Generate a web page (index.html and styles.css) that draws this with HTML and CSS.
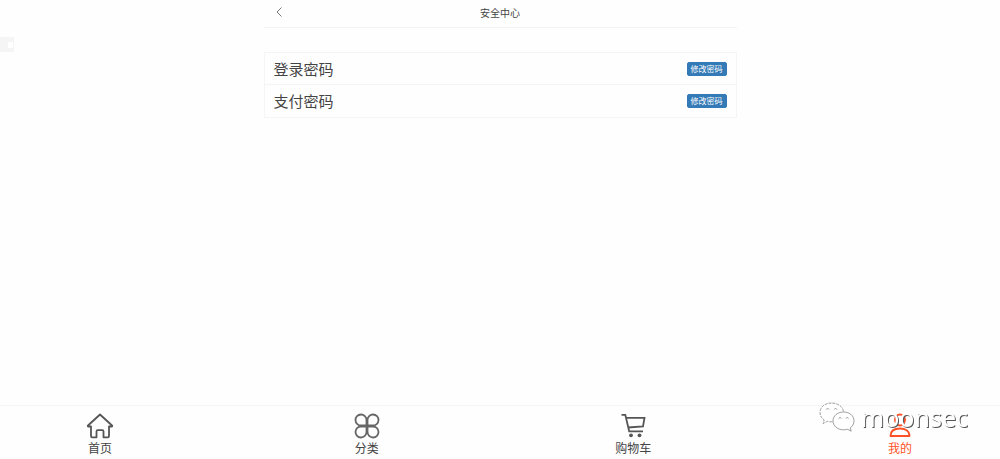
FILE: index.html
```html
<!DOCTYPE html>
<html lang="zh-CN">

<head>
    <meta charset="UTF-8">
    <meta name="viewport" content="width=device-width, initial-scale=1.0">
    <title>安全中心</title>
    <link rel="stylesheet" href="styles.css">
</head>

<body>
    <div class="side-tab"><span class="side-dot"></span></div>

    <div class="container">
        <header class="top-bar">
            <a href="#" class="back" aria-label="返回">
                <svg width="6" height="10" viewBox="0 0 6 10" fill="none" stroke="#777">
                    <path d="M5.5 0.5L1 5l4.5 4.5" />
                </svg>
            </a>
            <h1>安全中心</h1>
        </header>

        <ul class="list">
            <li>
                <span>登录密码</span>
                <button type="button">修改密码</button>
            </li>
            <li>
                <span>支付密码</span>
                <button type="button">修改密码</button>
            </li>
        </ul>
    </div>

    <nav class="tab-bar">
        <a href="#">
            <svg width="28" height="26" viewBox="0 0 28 26" fill="none" stroke="#555" stroke-width="1.8" stroke-linejoin="round">
                <path d="M14 1.5L2 12.5c-.4.4-.2 1 .4 1H5V23c0 .8.5 1.3 1.3 1.3h4.2v-6c0-.7.5-1.2 1.2-1.2h4.6c.7 0 1.2.5 1.2 1.2v6h4.2c.8 0 1.3-.5 1.3-1.3v-9.5h2.6c.6 0 .8-.6.4-1z" />
            </svg>
            <span>首页</span>
        </a>
        <a href="#">
            <svg width="28" height="26" viewBox="0 0 28 26" fill="none" stroke="#666" stroke-width="1.8">
                <path d="M13.5 12.5H8.3a5.5 5.5 0 1 1 5.2-5.5z" />
                <path d="M14.500 12.500h5.200a5.500 5.500 0 1 0-5.200-5.500z" />
                <path d="M13.500 13.500H8.300a5.500 5.500 0 1 0 5.200 5.500z" />
                <path d="M14.500 13.500h5.200a5.500 5.500 0 1 1-5.200 5.500z" />
            </svg>
            <span>分类</span>
        </a>
        <a href="#">
            <svg width="28" height="26" viewBox="0 0 28 26" fill="none" stroke="#555" stroke-width="1.8">
                <path d="M2.5 1.800h3.800L10.200 18.300H24M6.900 4.800h18.600l-1.500 8.500-15.100 1.200" />
                <circle cx="12" cy="22.300" r="1.900" fill="#555" stroke="none" />
                <circle cx="20.500" cy="22.300" r="1.900" fill="#555" stroke="none" />
            </svg>
            <span>购物车</span>
        </a>
        <a href="#" class="active">
            <svg width="28" height="26" viewBox="0 0 28 26" fill="none" stroke="#ff5226" stroke-width="1.8">
                <ellipse cx="14" cy="7" rx="5" ry="5.500" />
                <path d="M4.500 23c0-5 3.800-7.500 9.500-7.500s9.500 2.500 9.500 7.500z" stroke-linejoin="round" />
            </svg>
            <span>我的</span>
        </a>
    </nav>

    <div class="watermark">
        <svg width="36" height="30" viewBox="0 0 36 30" fill="#fff" stroke="#777" stroke-width="0.7">
            <path d="M12.500 1C6 1 1 5 1 10.500c0 3 1.600 5.800 4.200 7.500L4 21.500l4.500-2.200c1.300.3 2.600.5 4 .5 6.500 0 12-3.800 12-9.300S19 1 12.500 1z" stroke-dasharray="3 1" />
            <path d="M24.500 10C18.500 10 14 13.800 14 18.800s4.500 9 10.500 9c1.400 0 2.700-.2 3.900-.6l3.800 2-1-3.300c2.400-1.600 3.800-4.200 3.800-7.100 0-5-4.500-8.800-10.500-8.800z" />
            <path d="M7.200 7.500a1.500 1.500 0 0 1 2.800 0M15.200 7.500a1.500 1.500 0 0 1 2.800 0M19.800 16.500a1.300 1.300 0 0 1 2.500 0M27 16.500a1.300 1.300 0 0 1 2.500 0" fill="none" />
        </svg>
        <span>moonsec</span>
    </div>
</body>

</html>
```
FILE: styles.css
```css
* {
    box-sizing: border-box;
}

body {
    margin: 0;
    min-height: 100vh;
    background-color: #fefefe;
    color: #444;
    font-family: "Noto Sans CJK SC", sans-serif;
}

a {
    color: inherit;
    text-decoration: none;
}

.container {
    width: 47.3%;
    margin: 0 auto;
}

.top-bar {
    display: grid;
    grid-template-columns: 1fr auto 1fr;
    align-items: center;
    height: 28px;
    padding: 0 12px 2px;
    border-bottom: 1px solid #f3f3f3;
}

.back {
    display: flex;
    padding-bottom: 2px;
}

.top-bar h1 {
    margin: 0;
    font-size: 10px;
    font-weight: 400;
    line-height: 16px;
}

.list {
    margin: 24px 0 0;
    padding: 0;
    list-style: none;
    border: 1px solid #f5f5f5;
}

.list li {
    display: flex;
    justify-content: space-between;
    align-items: center;
    height: 31px;
    padding: 0 9px;
    font-size: 15px;
    line-height: 22px;
}

.list li + li {
    height: 33px;
    border-top: 1px solid #f5f5f5;
}

.list button {
    width: 40px;
    height: 14px;
    padding: 0;
    border: 1px solid #337ab7;
    border-radius: 2px;
    background-color: #337ab7;
    color: #fff;
    font-family: inherit;
    font-size: 8px;
    line-height: 12px;
    cursor: pointer;
}

.side-tab {
    position: fixed;
    top: 37px;
    left: 0;
    display: flex;
    justify-content: flex-end;
    align-items: center;
    width: 14px;
    height: 15px;
    padding-right: 1px;
    background-color: #f5f5f5;
}

.side-dot {
    width: 5px;
    height: 6px;
    background-color: #fff;
}

.tab-bar {
    position: fixed;
    bottom: 0;
    left: 0;
    display: flex;
    justify-content: space-between;
    width: 100%;
    height: 54px;
    padding-top: 7px;
    border-top: 1px solid #f5f5f5;
    background-color: #fefefe;
}

.tab-bar a {
    display: flex;
    flex-direction: column;
    align-items: center;
    width: 20%;
    font-size: 12px;
    line-height: 18px;
}

.tab-bar .active {
    color: #ff5226;
}

.watermark {
    position: fixed;
    right: 32px;
    bottom: 25px;
    display: flex;
    align-items: center;
    gap: 6px;
    height: 34px;
    color: #fff;
    font-family: "Noto Sans", sans-serif;
    font-size: 25px;
    line-height: 34px;
    text-shadow: 1px 1px 0 #555;
    pointer-events: none;
}
```
